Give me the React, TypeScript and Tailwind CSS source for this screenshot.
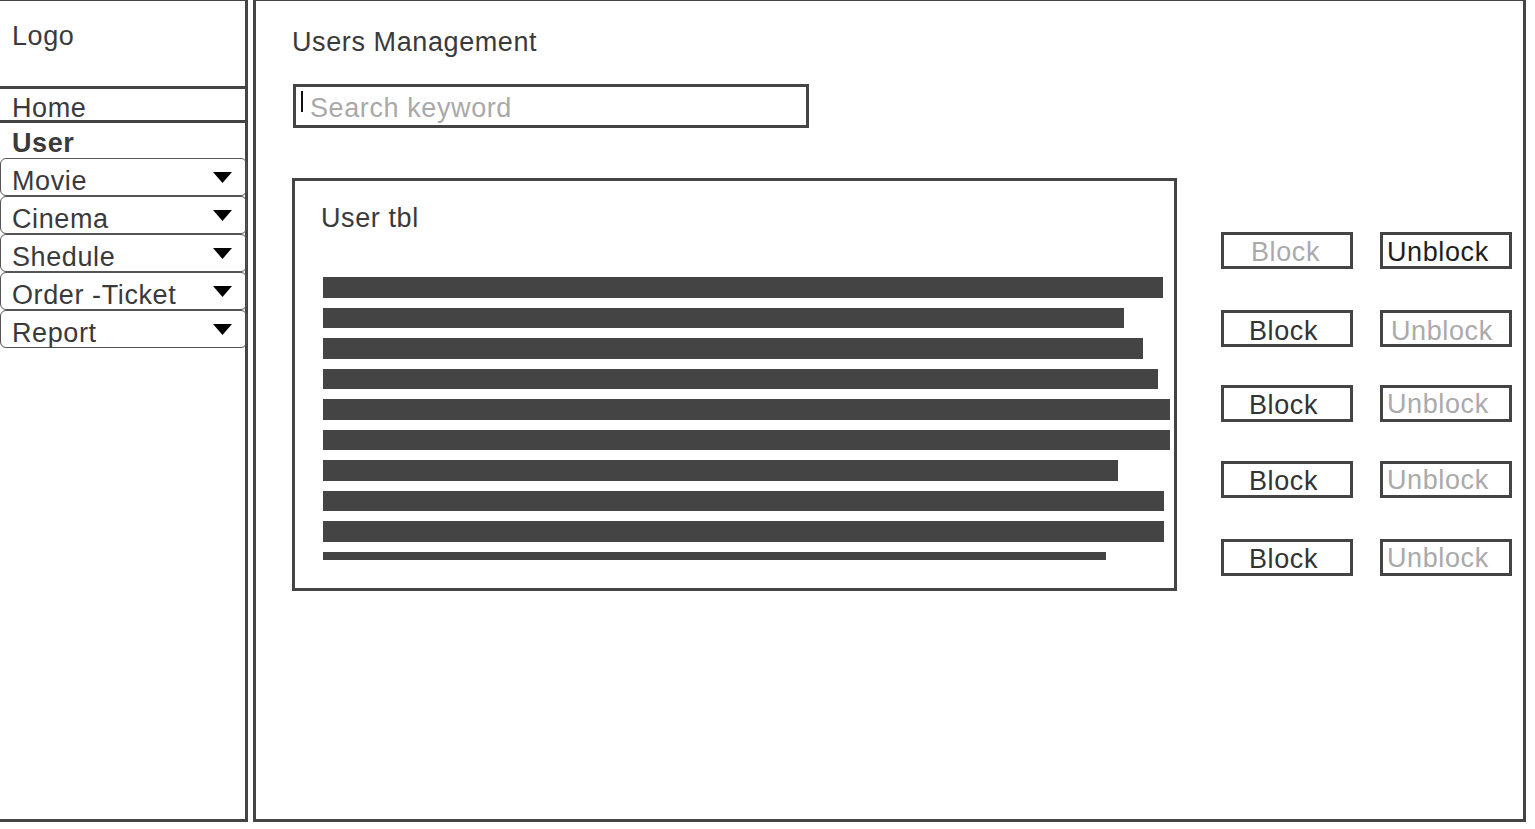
import React from 'react';

const font = "font-['Liberation_Sans',Arial,sans-serif]";

const menus = ['Movie', 'Cinema', 'Shedule', 'Order -Ticket', 'Report'];

// table placeholder rows
const bars = [
    'w-[840px] h-[21px]',
    'w-[801px] h-[20px] mt-[10px]',
    'w-[820px] h-[21px] mt-[10px]',
    'w-[835px] h-[20px] mt-[10px]',
    'w-[847px] h-[21px] mt-[10px]',
    'w-[847px] h-[20px] mt-[10px]',
    'w-[795px] h-[21px] mt-[10px]',
    'w-[841px] h-[20px] mt-[10px]',
    'w-[841px] h-[21px] mt-[10px]',
    'w-[783px] h-[8px] mt-[10px]',
];

const actions = [
    { row: 'mt-[54px]', block: 'pl-[27px] pt-[3px] text-[#aaaaaa]', unblock: 'pl-[4px] pt-[3px] text-[#1e1e1e]' },
    { row: 'mt-[41px]', block: 'pl-[25px] pt-[4px] text-[#333333]', unblock: 'pl-[8px] pt-[4px] text-[#aaaaaa]' },
    { row: 'mt-[38px]', block: 'pl-[25px] pt-[3px] text-[#333333]', unblock: 'pl-[4px] pt-0 text-[#aaaaaa]' },
    { row: 'mt-[39px]', block: 'pl-[25px] pt-[3px] text-[#333333]', unblock: 'pl-[4px] pt-0 text-[#aaaaaa]' },
    { row: 'mt-[41px]', block: 'pl-[25px] pt-[3px] text-[#333333]', unblock: 'pl-[4px] pt-0 text-[#aaaaaa]' },
];

const Caret = () => (
    <svg width="19" height="11" viewBox="0 0 19 11" className="mt-[13px] shrink-0">
        <polygon points="0,0 19,0 9.5,11" fill="#000" />
    </svg>
);

const Sidebar = () => (
    <aside className="-ml-[3px] -mt-[2px] w-[251px] h-[824px] shrink-0 border-[3px] border-[#444] flex flex-col">
        <div className="h-[88px] border-b-[3px] border-[#444] pl-[12px] pt-[20px] leading-[30px]">Logo</div>
        <div className="h-[34px] border-b-[3px] border-[#444] pl-[12px] pt-[6px] leading-[26px]">Home</div>
        <div className="h-[35px] pl-[12px] pt-[6px] leading-[28px] font-bold">User</div>
        {menus.map((m) => (
            <div
                key={m}
                className="h-[38px] border border-[#555] rounded-[6px] pl-[11px] pr-[14px] -mr-[2px] flex items-start justify-between"
            >
                <span className="pt-[8px] leading-[28px]">{m}</span>
                <Caret />
            </div>
        ))}
    </aside>
);

const App: React.FC = () => {
    return (
        <div className={`${font} flex h-[829px] overflow-hidden bg-white text-[27px] tracking-[0.6px] text-[#3a3a3a]`}>
            <Sidebar />

            <main className="ml-[5px] -mt-[2px] w-[1273px] h-[824px] shrink-0 border-[3px] border-[#444] pl-[36px] pt-[26px]">
                <h1 className="leading-[30px]">Users Management</h1>

                <div className="ml-px mt-[27px] w-[516px] h-[44px] border-[3px] border-[#444] flex items-start">
                    <span className="ml-[5px] mt-[4px] w-[2px] h-[21px] bg-[#111]" />
                    <span className="ml-[7px] pt-[2px] leading-[38px] text-[#a9a9a9]">Search keyword</span>
                </div>

                <div className="mt-[50px] flex items-start">
                    <section className="w-[885px] h-[413px] border-[3px] border-[#444] pt-[22px]">
                        <h2 className="pl-[26px] leading-[30px]">User tbl</h2>
                        <div className="mt-[44px] pl-[28px] flex flex-col">
                            {bars.map((b, i) => (
                                <div key={i} className={`${b} bg-[#444]`} />
                            ))}
                        </div>
                    </section>

                    <div className="ml-[44px] flex flex-col">
                        {actions.map((a, i) => (
                            <div key={i} className={`${a.row} flex gap-[27px]`}>
                                <button className={`w-[132px] h-[37px] border-[3px] border-[#444] text-left leading-[26px] ${a.block}`}>
                                    Block
                                </button>
                                <button className={`w-[132px] h-[37px] border-[3px] border-[#444] text-left leading-[26px] ${a.unblock}`}>
                                    Unblock
                                </button>
                            </div>
                        ))}
                    </div>
                </div>
            </main>
        </div>
    );
};

export default App;
